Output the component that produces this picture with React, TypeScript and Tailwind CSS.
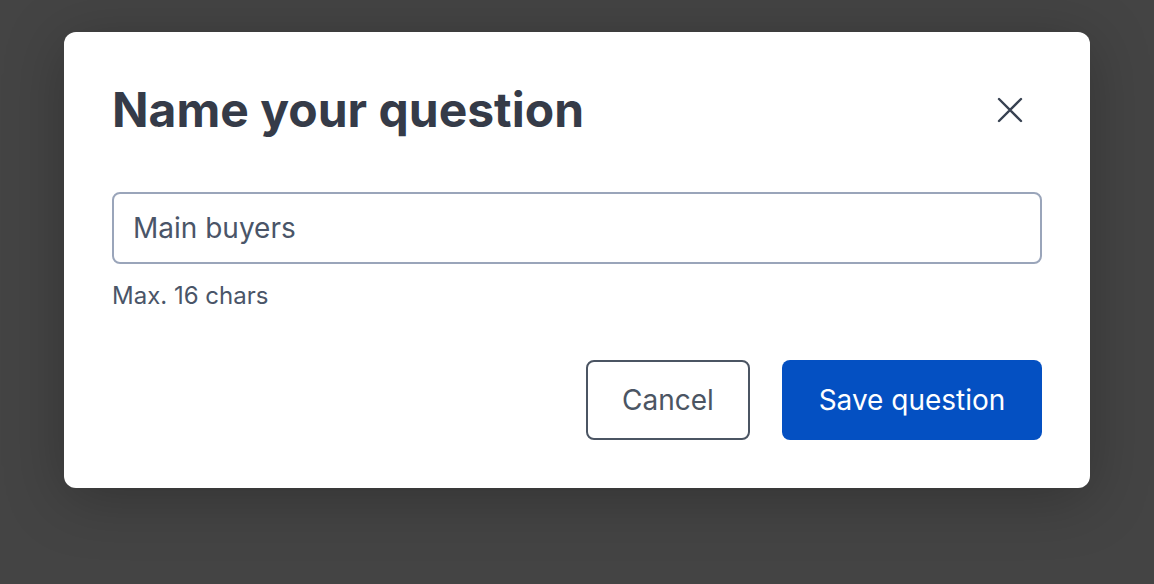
// Rename dialog shown over a dimmed page.
import { useState } from 'react'

function CloseIcon() {
  return (
    <svg width="26" height="26" viewBox="0 0 26 26" fill="none" aria-hidden="true">
      <path d="M2 2L24 24M24 2L2 24" stroke="#374151" strokeWidth="2.4" strokeLinecap="round" />
    </svg>
  )
}

export default function App() {
  const [name, setName] = useState('Main buyers')

  return (
    <div
      className="min-h-[584px] w-full bg-[#444444] px-16 pt-8"
      style={{ fontFamily: 'Inter, "Noto Sans", sans-serif' }}
    >
      <div className="flex flex-col rounded-xl bg-white px-12 pt-12 pb-12 shadow-[0_10px_60px_rgba(0,0,0,0.25)]">
        <div className="flex h-[60px] items-center justify-between">
          <h1 className="text-[48px] leading-[60px] font-bold text-[#353b48]">
            Name your question
          </h1>
          <button className="mr-[19px] flex h-[26px] w-[26px] items-center justify-center">
            <CloseIcon />
          </button>
        </div>

        <input
          value={name}
          onChange={e => setName(e.target.value)}
          maxLength={16}
          className="mt-[52px] h-[72px] w-full rounded-lg border-2 border-[#9aa5ba] px-[19px] text-[28px] text-[#4a5568] outline-none"
        />
        <p className="mt-[18px] text-[24px] leading-7 text-[#4a5568]">Max. 16 chars</p>

        <div className="mt-[50px] flex justify-end gap-8">
          <button className="h-20 w-[164px] rounded-lg border-2 border-[#4b5563] text-[28px] text-[#4b5563]">
            Cancel
          </button>
          <button className="h-20 w-[260px] rounded-lg bg-[#0450c2] text-[28px] text-white">
            Save question
          </button>
        </div>
      </div>
    </div>
  )
}
